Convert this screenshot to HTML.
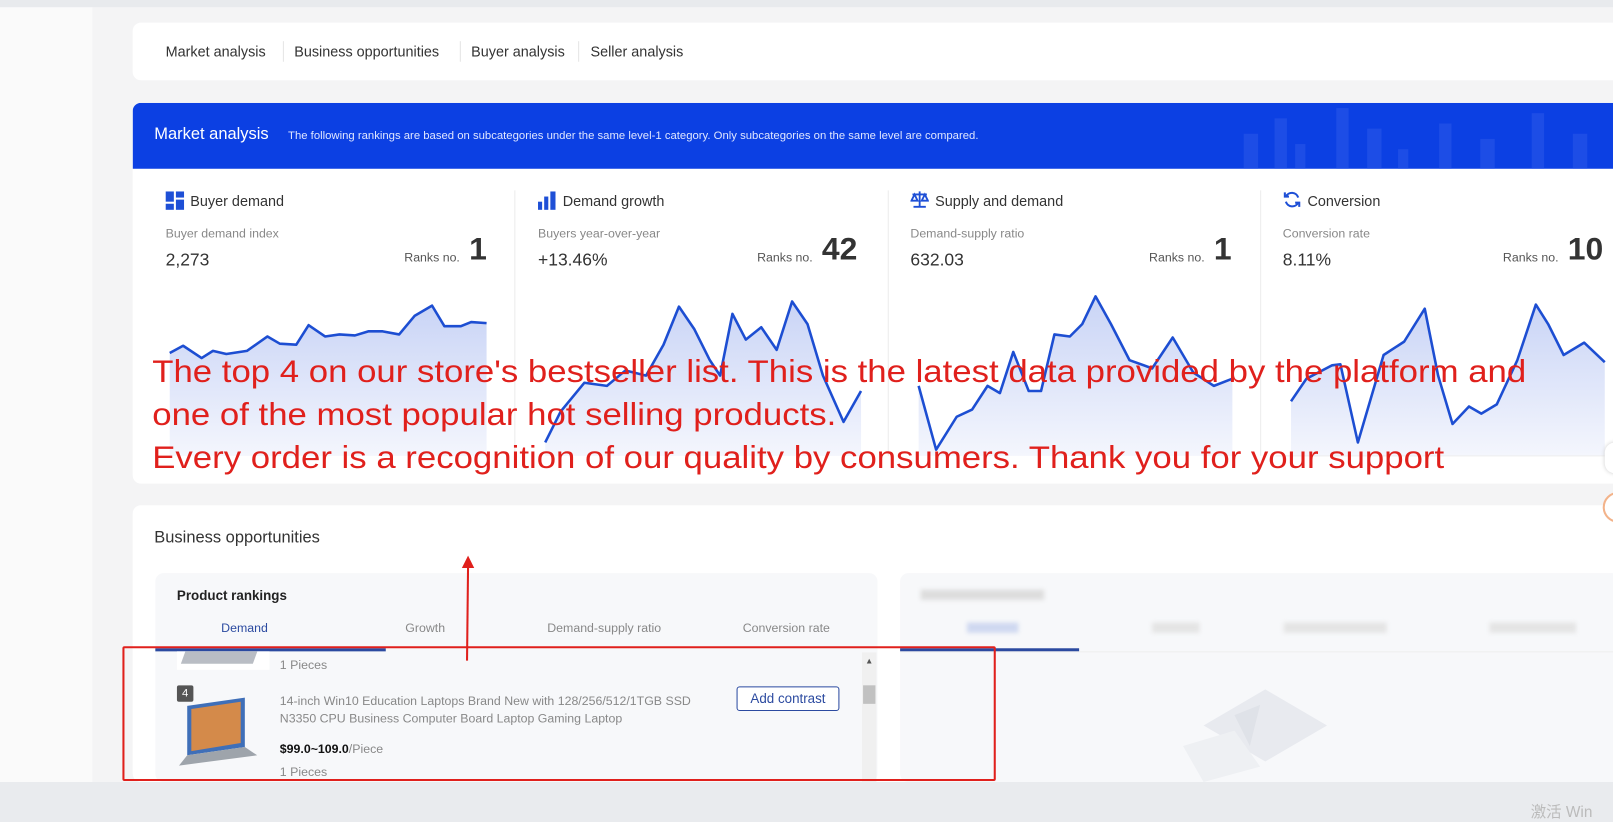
<!DOCTYPE html>
<html><head><meta charset="utf-8"><style>
*{margin:0;padding:0;box-sizing:border-box}
html,body{width:1613px;height:816px;overflow:hidden;background:#e9ebee;font-family:"Liberation Sans",sans-serif}
#w{position:absolute;left:0;top:0;width:1568px;height:793px;transform:scale(1.02870,1.02900);transform-origin:0 0}
.a{position:absolute}
.t{color:#333;font-size:14px}
.g{color:#888;font-size:12px}
.red{color:#e0201c;font-family:"Liberation Sans","Noto Sans CJK SC",sans-serif;font-size:31px;white-space:nowrap;transform:scaleX(1.09);transform-origin:0 0}
</style></head><body><div id="w">
<div class="a" style="left:0;top:0;width:1568px;height:7px;background:#e8eaed"></div>
<div class="a" style="left:0;top:7px;width:90px;height:753px;background:#fafafa"></div>
<div class="a" style="left:90px;top:7px;width:1478px;height:753px;background:#f4f4f5"></div>
<div class="a" style="left:0;top:760px;width:1568px;height:33px;background:#e9ebee"></div>
<div class="a" style="left:1488px;top:778px;color:#bbb;font-size:15px">激活 Win</div>

<div class="a" style="left:129px;top:22px;width:1450px;height:56px;background:#fff;border-radius:8px"></div>
<div class="a t" style="left:161px;top:42px">Market analysis</div>
<div class="a" style="left:275px;top:40px;width:1px;height:20px;background:#e5e5e5"></div>
<div class="a t" style="left:286px;top:42px">Business opportunities</div>
<div class="a" style="left:447px;top:40px;width:1px;height:20px;background:#e5e5e5"></div>
<div class="a t" style="left:458px;top:42px">Buyer analysis</div>
<div class="a" style="left:562px;top:40px;width:1px;height:20px;background:#e5e5e5"></div>
<div class="a t" style="left:574px;top:42px">Seller analysis</div>

<div class="a" style="left:129px;top:100px;width:1450px;height:370px;background:#fff;border-radius:8px;overflow:hidden">
<div style="height:64px;background:#0c40e3;position:relative">
<svg class="a" style="left:1070px;top:0" width="380" height="64"><g fill="#1d4de6"><rect x="10" y="30" width="14" height="34"/><rect x="40" y="15" width="12" height="49"/><rect x="60" y="40" width="10" height="24"/><rect x="100" y="5" width="12" height="59"/><rect x="130" y="25" width="14" height="39"/><rect x="160" y="45" width="10" height="19"/><rect x="200" y="20" width="12" height="44"/><rect x="240" y="35" width="14" height="29"/><rect x="290" y="10" width="12" height="54"/><rect x="330" y="30" width="14" height="34"/></g></svg>
<div class="a" style="left:21px;top:22px;color:#fff;font-size:16px">Market analysis</div>
<div class="a" style="left:151px;top:26px;color:#dfe6ff;font-size:11px">The following rankings are based on subcategories under the same level-1 category. Only subcategories on the same level are compared.</div>
</div></div>
<div class="a" style="left:500px;top:185px;width:1px;height:258px;background:#ececec"></div>
<div class="a" style="left:863px;top:185px;width:1px;height:258px;background:#ececec"></div>
<div class="a" style="left:1225px;top:185px;width:1px;height:258px;background:#ececec"></div>

<svg class="a" style="left:161px;top:186px" width="18" height="18"><rect x="0" y="0" width="8" height="10" fill="#1e4fd6"/><rect x="10" y="0" width="8" height="6" fill="#1e4fd6"/><rect x="10" y="8" width="8" height="10" fill="#1e4fd6"/><rect x="0" y="12" width="8" height="6" fill="#1e4fd6"/></svg>
<div class="a t" style="left:185px;top:187px">Buyer demand</div>
<svg class="a" style="left:523px;top:186px" width="18" height="18"><rect x="0" y="10" width="4" height="8" fill="#1e4fd6"/><rect x="6" y="5" width="4" height="13" fill="#1e4fd6"/><rect x="12" y="0" width="5" height="18" fill="#1e4fd6"/></svg>
<div class="a t" style="left:547px;top:187px">Demand growth</div>
<svg class="a" style="left:885px;top:185px" width="18" height="18" fill="none" stroke="#1e4fd6" stroke-width="1.8"><path d="M9 1v15M3 16h12M2 4h14M4 4l-3 6h6zM14 4l-3 6h6z"/></svg>
<div class="a t" style="left:909px;top:187px">Supply and demand</div>
<svg class="a" style="left:1247px;top:185px" width="18" height="18" fill="none" stroke="#1e4fd6" stroke-width="2"><path d="M15 7a6.5 6.5 0 0 0-12-1M3 11a6.5 6.5 0 0 0 12 1"/><path d="M2 2v4h4M16 16v-4h-4"/></svg>
<div class="a t" style="left:1271px;top:187px">Conversion</div>

<div class="a g" style="left:161px;top:220px">Buyer demand index</div>
<div class="a" style="left:161px;top:243px;font-size:17px;color:#333">2,273</div>
<div class="a" style="left:393px;top:243px;font-size:12px;color:#555">Ranks no.</div>
<div class="a" style="left:456px;top:224px;font-size:31px;font-weight:bold;color:#333">1</div>
<div class="a g" style="left:523px;top:220px">Buyers year-over-year</div>
<div class="a" style="left:523px;top:243px;font-size:17px;color:#333">+13.46%</div>
<div class="a" style="left:736px;top:243px;font-size:12px;color:#555">Ranks no.</div>
<div class="a" style="left:799px;top:224px;font-size:31px;font-weight:bold;color:#333">42</div>
<div class="a g" style="left:885px;top:220px">Demand-supply ratio</div>
<div class="a" style="left:885px;top:243px;font-size:17px;color:#333">632.03</div>
<div class="a" style="left:1117px;top:243px;font-size:12px;color:#555">Ranks no.</div>
<div class="a" style="left:1180px;top:224px;font-size:31px;font-weight:bold;color:#333">1</div>
<div class="a g" style="left:1247px;top:220px">Conversion rate</div>
<div class="a" style="left:1247px;top:243px;font-size:17px;color:#333">8.11%</div>
<div class="a" style="left:1461px;top:243px;font-size:12px;color:#555">Ranks no.</div>
<div class="a" style="left:1524px;top:224px;font-size:31px;font-weight:bold;color:#333">10</div>

<svg class="a" style="left:0;top:0" width="1568" height="470">
<defs><linearGradient id="gr" x1="0" y1="0" x2="0" y2="1"><stop offset="0" stop-color="#c9d4f6"/><stop offset="1" stop-color="#f4f6fd"/></linearGradient></defs>
<g fill="url(#gr)" stroke="none">
<polygon points="165,343 178,336 196,348 207,341 220,344 240,341 260,327 272,334 288,335 300,316 316,327 330,325 345,326 358,322 372,322 388,325 403,307 420,297 432,317 448,317 458,313 473,314 473,443 165,443"/>
<polygon points="530,430 545,400 568,372 590,375 608,360 628,365 645,335 660,298 675,320 690,350 700,365 712,305 725,330 740,318 755,340 770,293 785,315 800,365 820,410 837,380 837,443 530,443"/>
<polygon points="893,375 910,437 930,405 945,398 960,375 972,382 985,342 1000,380 1012,380 1025,325 1040,327 1052,315 1065,288 1080,315 1098,350 1120,358 1140,328 1160,362 1180,375 1198,368 1198,443 893,443"/>
<polygon points="1255,390 1270,368 1295,355 1303,354 1320,430 1345,345 1365,332 1385,300 1398,365 1412,412 1428,395 1440,402 1455,393 1475,350 1493,296 1505,315 1520,345 1540,333 1560,352 1560,443 1255,443"/>
</g>
<g fill="none" stroke="#1d4ed2" stroke-width="2.5" stroke-linejoin="round">
<polyline points="165,343 178,336 196,348 207,341 220,344 240,341 260,327 272,334 288,335 300,316 316,327 330,325 345,326 358,322 372,322 388,325 403,307 420,297 432,317 448,317 458,313 473,314"/>
<polyline points="530,430 545,400 568,372 590,375 608,360 628,365 645,335 660,298 675,320 690,350 700,365 712,305 725,330 740,318 755,340 770,293 785,315 800,365 820,410 837,380"/>
<polyline points="893,375 910,437 930,405 945,398 960,375 972,382 985,342 1000,380 1012,380 1025,325 1040,327 1052,315 1065,288 1080,315 1098,350 1120,358 1140,328 1160,362 1180,375 1198,368"/>
<polyline points="1255,390 1270,368 1295,355 1303,354 1320,430 1345,345 1365,332 1385,300 1398,365 1412,412 1428,395 1440,402 1455,393 1475,350 1493,296 1505,315 1520,345 1540,333 1560,352"/>
</g>
<line x1="1240" y1="443" x2="1568" y2="443" stroke="#eee"/>
</svg>

<div class="a red" style="left:148px;top:343px">The top 4 on our store's bestseller list. This is the latest data provided by the platform and</div>
<div class="a red" style="left:148px;top:385px">one of the most popular hot selling products.</div>
<div class="a red" style="left:148px;top:427px">Every order is a recognition of our quality by consumers. Thank you for your support</div>

<div class="a" style="left:129px;top:491px;width:1450px;height:269px;background:#fff;border-radius:8px"></div>
<div class="a" style="left:150px;top:514px;font-size:16px;color:#333">Business opportunities</div>
<div class="a" style="left:151px;top:557px;width:702px;height:203px;background:#f7f8fa;border-radius:8px"></div>
<div class="a" style="left:875px;top:557px;width:700px;height:203px;background:#f7f8fa;border-radius:8px"></div>
<div class="a" style="left:172px;top:571px;font-size:13px;font-weight:bold;color:#222">Product rankings</div>
<div class="a" style="left:215px;top:603px;font-size:12px;color:#2b4aa0">Demand</div>
<div class="a" style="left:394px;top:603px;font-size:12px;color:#888">Growth</div>
<div class="a" style="left:532px;top:603px;font-size:12px;color:#888">Demand-supply ratio</div>
<div class="a" style="left:722px;top:603px;font-size:12px;color:#888">Conversion rate</div>
<div class="a" style="left:151px;top:630px;width:224px;height:3px;background:#2b4aa0"></div>
<div class="a" style="left:895px;top:573px;width:120px;height:10px;background:#ddd;filter:blur(2px)"></div>
<div class="a" style="left:940px;top:605px;width:50px;height:10px;background:#cfd8f0;filter:blur(2px)"></div>
<div class="a" style="left:1120px;top:605px;width:46px;height:10px;background:#e4e4e4;filter:blur(2px)"></div>
<div class="a" style="left:1248px;top:605px;width:100px;height:10px;background:#e4e4e4;filter:blur(2px)"></div>
<div class="a" style="left:1448px;top:605px;width:84px;height:10px;background:#e4e4e4;filter:blur(2px)"></div>
<div class="a" style="left:875px;top:630px;width:174px;height:3px;background:#2b4aa0"></div>
<div class="a" style="left:875px;top:633px;width:693px;height:1px;background:#eee"></div>
<svg class="a" style="left:1130px;top:665px" width="170" height="95"><polygon points="40,40 100,5 160,40 100,75" fill="#e8eaef"/><polygon points="20,60 70,45 95,80 40,95" fill="#eef0f3"/><polygon points="70,30 95,20 85,60" fill="#dfe2e8"/></svg>

<div class="a" style="left:172px;top:633px;width:90px;height:18px;background:#fff"></div>
<div class="a" style="left:178px;top:633px;width:70px;height:12px;background:#b9bdc4;transform:skewX(-20deg)"></div>
<div class="a" style="left:272px;top:639px;font-size:12px;color:#888">1 Pieces</div>
<div class="a" style="left:172px;top:666px;width:16px;height:16px;background:#555;color:#fff;font-size:11px;text-align:center;line-height:16px;border-radius:2px">4</div>
<svg class="a" style="left:172px;top:676px" width="80" height="70"><polygon points="10,10 66,2 66,50 10,58" fill="#3f6fb8"/><polygon points="14,13 62,6 62,46 14,54" fill="#d48a4a"/><polygon points="10,58 66,50 78,58 2,68" fill="#9ea4ab"/></svg>
<div class="a" style="left:272px;top:673px;font-size:12px;color:#888;line-height:17px;width:430px">14-inch Win10 Education Laptops Brand New with 128/256/512/1TGB SSD N3350 CPU Business Computer Board Laptop Gaming Laptop</div>
<div class="a" style="left:272px;top:721px;font-size:12px;color:#111"><b>$99.0~109.0</b><span style="color:#888">/Piece</span></div>
<div class="a" style="left:272px;top:743px;font-size:12px;color:#888">1 Pieces</div>
<div class="a" style="left:716px;top:667px;width:100px;height:24px;border:1px solid #2b4aa0;border-radius:3px;background:#fff;color:#2b4aa0;font-size:13px;text-align:center;line-height:22px">Add contrast</div>
<div class="a" style="left:838px;top:634px;width:14px;height:126px;background:#f0f0f0"></div>
<div class="a" style="left:841px;top:638px;font-size:8px;color:#555">▲</div>
<div class="a" style="left:839px;top:666px;width:12px;height:18px;background:#c1c1c1"></div>

<div class="a" style="left:119px;top:628px;width:849px;height:131px;border:2px solid #e0201c;border-radius:2px"></div>
<svg class="a" style="left:440px;top:538px" width="30" height="110"><line x1="14" y1="104" x2="15" y2="12" stroke="#e0201c" stroke-width="2"/><polygon points="9,14 15,2 21,14" fill="#e0201c"/></svg>
<div class="a" style="left:1558px;top:478px;width:30px;height:30px;border:2px solid #f3b38a;border-radius:50%;background:#fff"></div>
<div class="a" style="left:1560px;top:430px;width:20px;height:30px;border-radius:10px;background:#fff;box-shadow:0 0 4px #ccc"></div>
</div></body></html>
